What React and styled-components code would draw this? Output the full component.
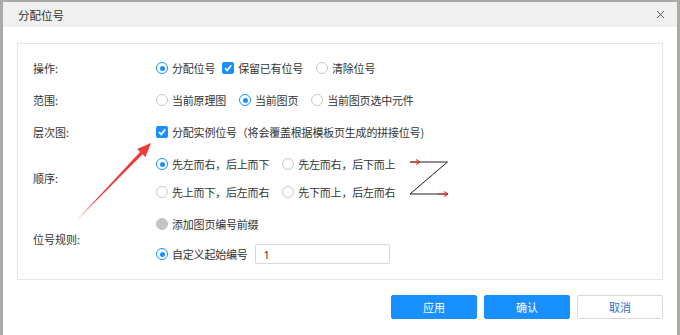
import styled, { createGlobalStyle } from 'styled-components';
import { X } from 'lucide-react';

const GlobalStyle = createGlobalStyle`
  html, body {
    margin: 0;
    padding: 0;
    background: #a9a9a6;
    font-family: "Noto Sans CJK SC", "Noto Sans", sans-serif;
  }
`;

function Radio({ checked, disabled, children }) {
  return (
    <Option>
      <RadioDot checked={checked} disabled={disabled} />
      <span>{children}</span>
    </Option>
  );
}

function Check({ children, sub }) {
  return (
    <Option sub={sub}>
      <CheckBox>
        <svg width="10" height="10" viewBox="0 0 10 10">
          <path d="M2 5.2 L4.2 7.4 L8.2 2.4" fill="none" stroke="#fff" strokeWidth="1.7" />
        </svg>
      </CheckBox>
      <span>{children}</span>
    </Option>
  );
}

function App() {
  return (
    <>
      <GlobalStyle />
      <Dialog>
        <Header>
          <Title>分配位号</Title>
          <Close><X size={13} strokeWidth={1.6} /></Close>
        </Header>

        <Panel>
          <Section>
            <Label>操作:</Label>
            <Lines>
              <Line>
                <Radio checked>分配位号</Radio>
                <Check sub>保留已有位号</Check>
                <Radio>清除位号</Radio>
              </Line>
            </Lines>
          </Section>

          <Section>
            <Label>范围:</Label>
            <Lines>
              <Line>
                <Radio>当前原理图</Radio>
                <Radio checked>当前图页</Radio>
                <Radio>当前图页选中元件</Radio>
              </Line>
            </Lines>
          </Section>

          <Section>
            <Label>层次图:</Label>
            <Lines>
              <Line>
                <Check>分配实例位号（将会覆盖根据模板页生成的拼接位号)</Check>
              </Line>
            </Lines>
          </Section>

          <Section>
            <Label>顺序:</Label>
            <Lines>
              <Line>
                <Radio checked>先左而右，后上而下</Radio>
                <Radio>先左而右，后下而上</Radio>
              </Line>
              <Line>
                <Radio>先上而下，后左而右</Radio>
                <Radio>先下而上，后左而右</Radio>
              </Line>
            </Lines>
            <ZIcon width="40" height="38" viewBox="0 0 40 38">
              <path d="M1 3 H38.5 L1 35 H39" fill="none" stroke="#222" strokeWidth="1" />
              <path d="M1 3 H11" stroke="#e61e1e" strokeWidth="1" />
              <path d="M7 0.5 L11 3 L7 5.5" fill="none" stroke="#e61e1e" strokeWidth="1" />
              <path d="M29 35 H39" stroke="#e61e1e" strokeWidth="1" />
              <path d="M35 32.5 L39 35 L35 37.5" fill="none" stroke="#e61e1e" strokeWidth="1" />
            </ZIcon>
          </Section>

          <Section>
            <Label>位号规则:</Label>
            <Lines gap={2}>
              <Line>
                <Radio disabled>添加图页编号前缀</Radio>
              </Line>
              <Line>
                <Radio checked>自定义起始编号</Radio>
                <NumberInput defaultValue="1" />
              </Line>
            </Lines>
          </Section>

          <Arrow width="80" height="82" viewBox="0 0 80 82">
            <polygon
              points="2,80 68.6,13.3 71.4,16.1 77,2 63.2,8.1 66,10.9"
              fill="#f03a3a"
            />
          </Arrow>
        </Panel>

        <Footer>
          <Button primary>应用</Button>
          <Button primary>确认</Button>
          <Button>取消</Button>
        </Footer>
      </Dialog>
    </>
  );
}

const Dialog = styled.div`
  margin: 2px 3px 0 3px;
  height: 333px;
  background: #fff;
  box-sizing: border-box;
`;

const Header = styled.div`
  height: 25px;
  background: #f0f0f0;
  display: flex;
  align-items: center;
  justify-content: space-between;
  padding: 0 10px 0 15px;
`;

const Title = styled.div`
  font-size: 11.5px;
  color: #333;
`;

const Close = styled.div`
  display: flex;
  color: #444;
`;

const Panel = styled.div`
  position: relative;
  margin: 16px 14px 0 14px;
  height: 237px;
  box-sizing: border-box;
  border: 1px solid #e6e6e6;
  padding: 10px 0 0 15px;
  display: flex;
  flex-direction: column;
  gap: 4px;
`;

const Section = styled.div`
  display: flex;
  align-items: center;
`;

const Label = styled.div`
  width: 123px;
  flex: none;
  font-size: 11px;
  color: #333;
`;

const Lines = styled.div`
  display: flex;
  flex-direction: column;
  gap: ${(p) => p.gap || 0}px;
`;

const Line = styled.div`
  height: 28px;
  display: flex;
  align-items: center;
  gap: 13px;
`;

const Option = styled.label`
  display: flex;
  align-items: center;
  gap: 4px;
  font-size: 11px;
  letter-spacing: -0.2px;
  color: #333;
  white-space: nowrap;
  margin-left: ${(p) => (p.sub ? '-6px' : '0')};
`;

const RadioDot = styled.span`
  width: 12px;
  height: 12px;
  flex: none;
  box-sizing: border-box;
  border-radius: 50%;
  border: 1px solid ${(p) => (p.checked ? '#1890ff' : p.disabled ? '#c4c4c4' : '#c9c9c9')};
  background: ${(p) => (p.disabled ? '#c4c4c4' : '#fff')};
  display: flex;
  align-items: center;
  justify-content: center;

  &::after {
    content: '';
    display: ${(p) => (p.checked ? 'block' : 'none')};
    width: 5px;
    height: 5px;
    border-radius: 50%;
    background: #1890ff;
  }
`;

const CheckBox = styled.span`
  width: 12px;
  height: 12px;
  flex: none;
  border-radius: 2px;
  background: #1890ff;
  display: flex;
  align-items: center;
  justify-content: center;
`;

const ZIcon = styled.svg`
  margin-left: 14px;
  flex: none;
`;

const NumberInput = styled.input`
  width: 135px;
  height: 20px;
  box-sizing: border-box;
  border: 1px solid #d9d9d9;
  border-radius: 2px;
  padding: 0 8px;
  margin-left: -6px;
  font-size: 11px;
  font-family: "Noto Sans", sans-serif;
  color: #333;
  outline: none;
`;

const Arrow = styled.svg`
  position: absolute;
  left: 56px;
  top: 97px;
`;

const Footer = styled.div`
  display: flex;
  justify-content: flex-end;
  gap: 7px;
  margin-top: 15px;
  padding-right: 14px;
`;

const Button = styled.button`
  width: 86px;
  height: 24px;
  box-sizing: border-box;
  border-radius: 2px;
  border: 1px solid ${(p) => (p.primary ? '#1890ff' : '#d9d9d9')};
  background: ${(p) => (p.primary ? '#1890ff' : '#fff')};
  color: ${(p) => (p.primary ? '#fff' : '#1d6fc7')};
  font-size: 11px;
  font-family: "Noto Sans CJK SC", sans-serif;
  cursor: pointer;
`;

export default App;
